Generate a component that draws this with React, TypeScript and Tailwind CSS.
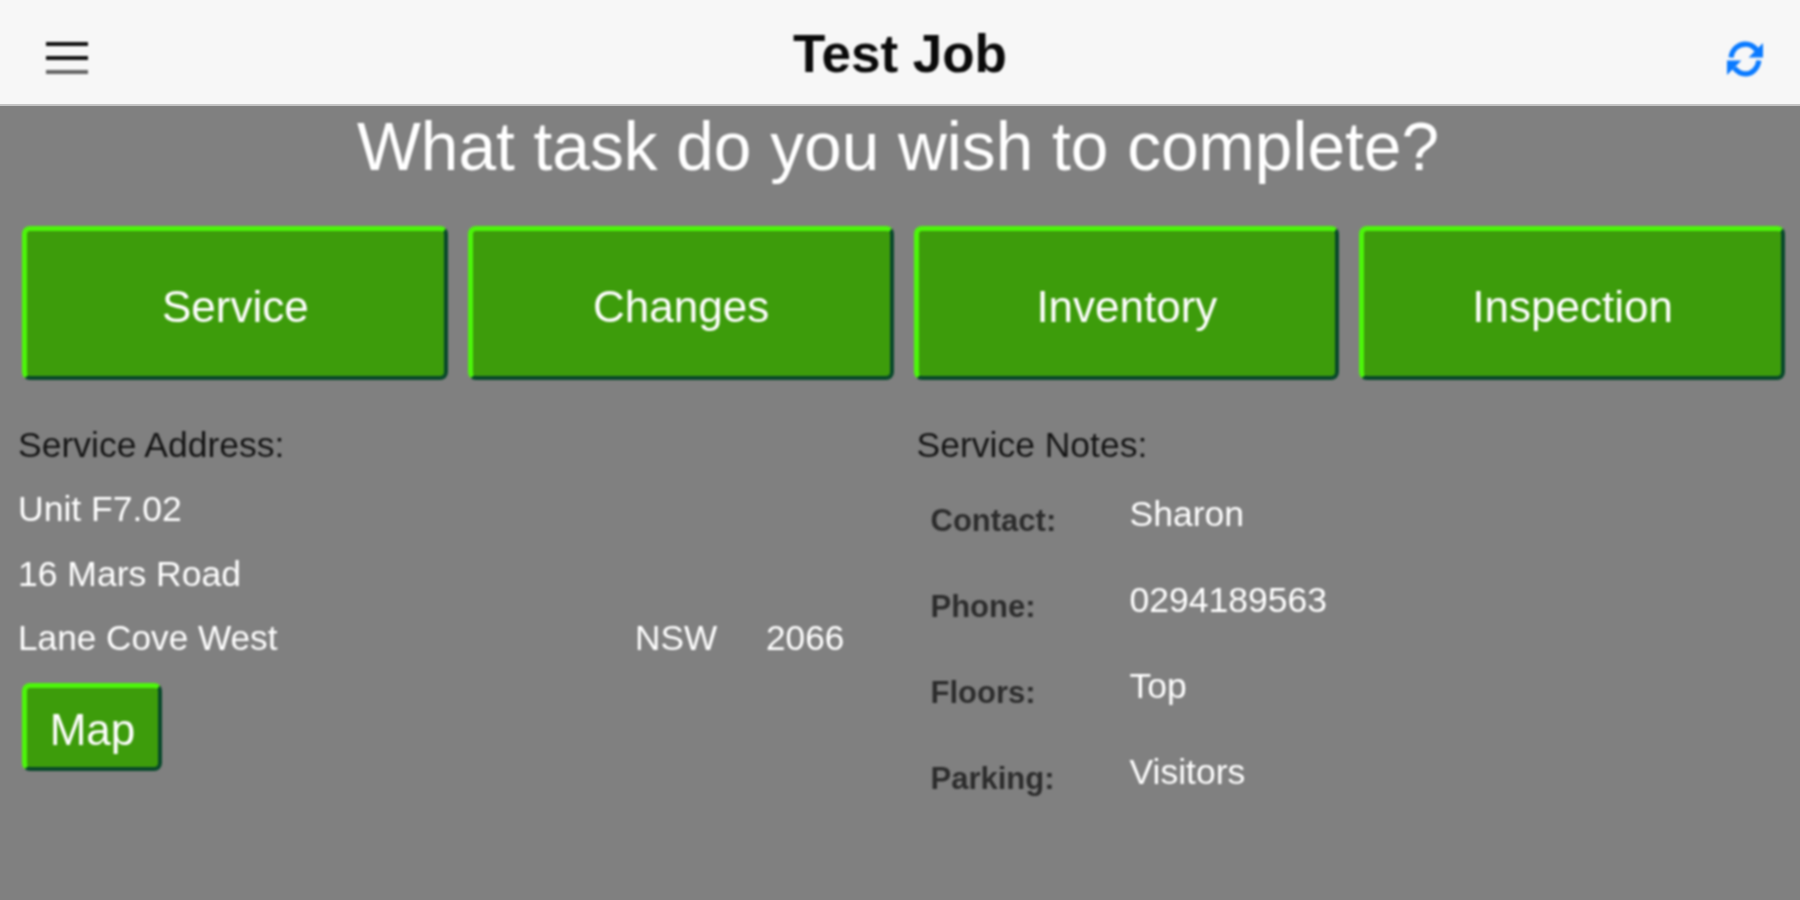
const tasks = ["Service", "Changes", "Inventory", "Inspection"];

const notes = [
  { label: "Contact:", value: "Sharon" },
  { label: "Phone:", value: "0294189563" },
  { label: "Floors:", value: "Top" },
  { label: "Parking:", value: "Visitors" },
];

const btn =
  "rounded-[8px] border-t-[5px] border-l-[5px] border-r-[4px] border-b-[4px] border-t-[#4cf50a] border-l-[#4cf50a] border-r-[#08482a] border-b-[#08482a] bg-[#3d9c0b] text-white";

function RefreshIcon() {
  return (
    <svg viewBox="0 0 35 35" className="h-[36px] w-[36px] text-[#0a7aff]" fill="none">
      <path d="M4 16C5 8 11 3 18 3c4 0 8 2 11 6" stroke="currentColor" strokeWidth="5" />
      <path d="M35 2v14H21z" fill="currentColor" />
      <path d="M31 19c-1 8-7 13-13 13-4 0-8-2-11-6" stroke="currentColor" strokeWidth="5" />
      <path d="M0 33V19h14z" fill="currentColor" />
    </svg>
  );
}

export default function App() {
  return (
    <div className="h-[900px] w-[1800px] overflow-hidden bg-[#808080] font-['Liberation_Sans',Arial,sans-serif]">
      {/* Header */}
      <header className="grid h-[106px] grid-cols-3 items-center border-b-2 border-[#c4c4c4] bg-[#f7f7f7] px-[37px]">
        <div className="ml-[9px] mt-[11px] flex w-[42px] flex-col gap-[10px] blur-[0.8px]">
          <span className="h-[4px] bg-[#111]"></span>
          <span className="h-[4px] bg-[#111]"></span>
          <span className="h-[4px] bg-[#666]"></span>
        </div>
        <h1 className="mt-[2px] text-center text-[53px] font-bold leading-none text-[#0a0a0a] blur-[0.8px]">
          Test Job
        </h1>
        <div className="mt-[13px] flex justify-end blur-[0.8px]">
          <RefreshIcon />
        </div>
      </header>

      <h2 className="mt-[8px] pr-[4px] text-center text-[67.6px] leading-[66px] text-white blur-[0.8px]">
        What task do you wish to complete?
      </h2>

      {/* Tasks */}
      <div className="mt-[46px] grid grid-cols-4 gap-[20px] pl-[22px] pr-[15px] blur-[0.8px]">
        {tasks.map((t) => (
          <button key={t} className={`${btn} h-[154px] pt-[6px] text-[44px]`}>
            {t}
          </button>
        ))}
      </div>

      <div className="mt-[45px] grid grid-cols-2 gap-[15px] pl-[18px] blur-[0.8px]">
        {/* Address */}
        <div>
          <p className="text-[35.5px] leading-[40px] text-[#141414]">Service Address:</p>
          <p className="mt-[24px] text-[35.5px] leading-[40px] text-white">Unit F7.02</p>
          <p className="mt-[25px] text-[35.5px] leading-[40px] text-white">16 Mars Road</p>
          <div className="mt-[24px] flex text-[35.2px] leading-[40px] text-white">
            <span className="w-[617px]">Lane Cove West</span>
            <span className="w-[131px]">NSW</span>
            <span>2066</span>
          </div>
          <button className={`${btn} ml-[4px] mt-[25px] h-[88px] w-[140px] pt-[5px] text-[44px]`}>Map</button>
        </div>

        {/* Notes */}
        <div>
          <p className="text-[35.5px] leading-[40px] text-[#141414]">Service Notes:</p>
          <div className="mt-[29px] flex flex-col gap-[46px] pl-[14px]">
            {notes.map((n) => (
              <div key={n.label} className="flex h-[40px]">
                <span className="mt-[7px] w-[199px] text-[31px] font-bold leading-[40px] text-[#2c2c2c]">
                  {n.label}
                </span>
                <span className="text-[35.5px] leading-[40px] text-white">{n.value}</span>
              </div>
            ))}
          </div>
        </div>
      </div>
    </div>
  );
}
